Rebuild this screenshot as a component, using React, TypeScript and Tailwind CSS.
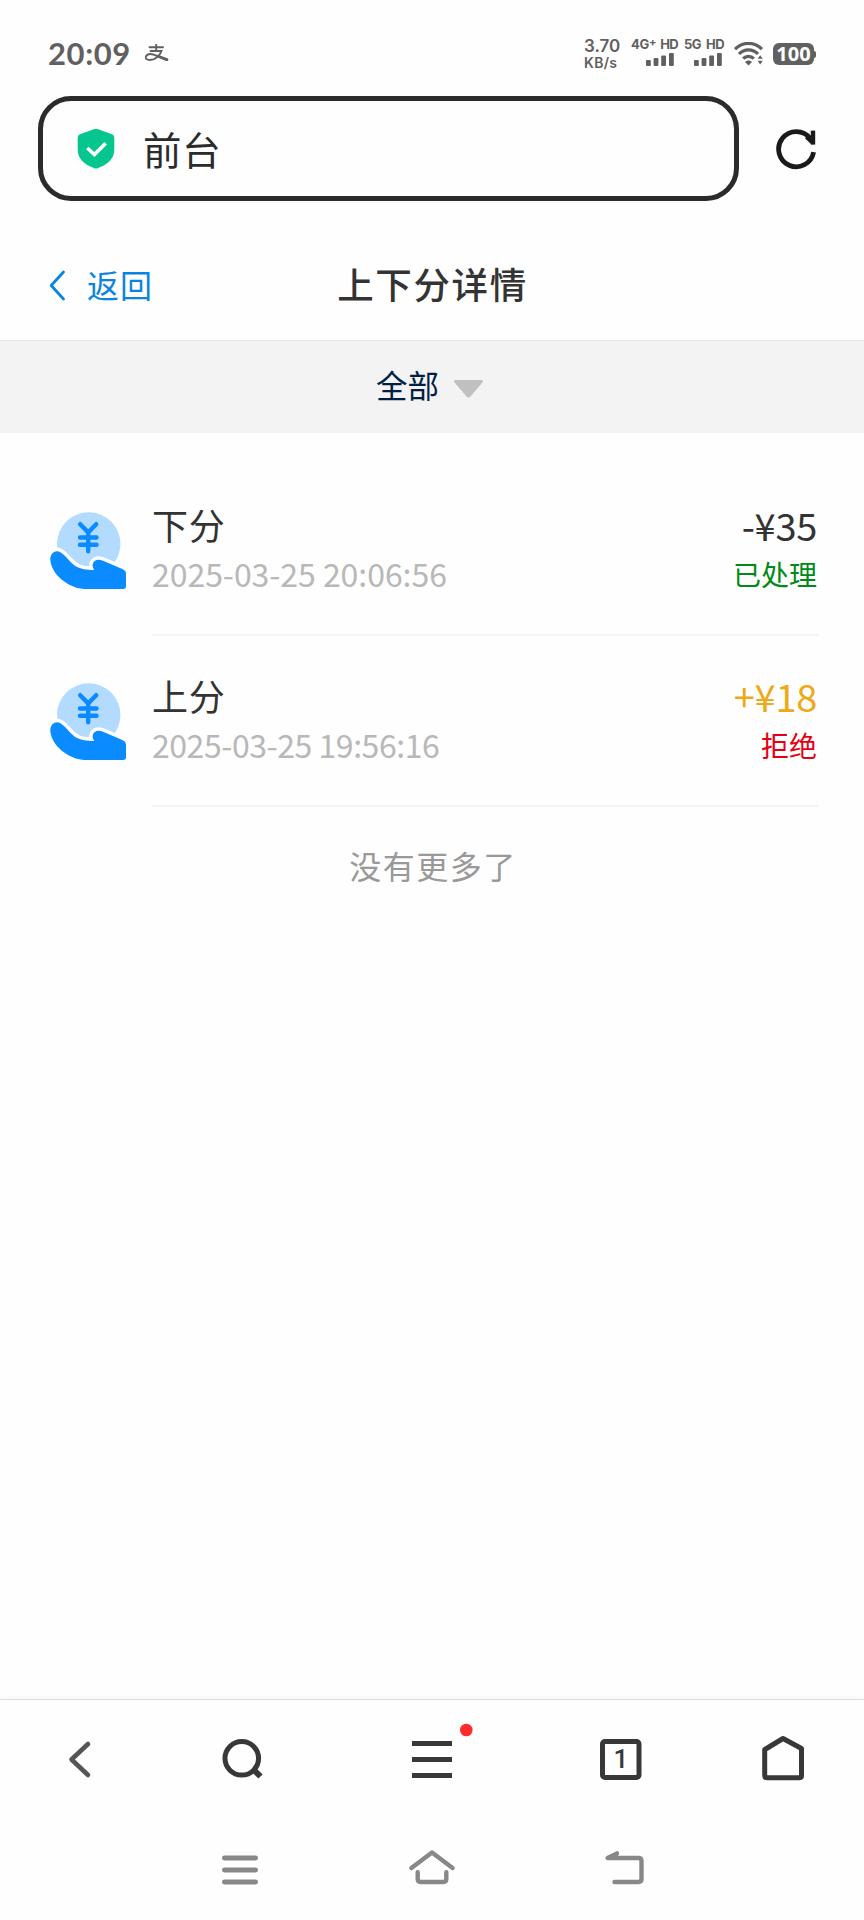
const RECORDS = [
  { id: 1, title: '下分', time: '2025-03-25 20:06:56', timeSpacing: 'tracking-[-0.05px]', amount: '-¥35', amountColor: 'text-[#333333]', status: '已处理', statusColor: 'text-[#008a17]' },
  { id: 2, title: '上分', time: '2025-03-25 19:56:16', timeSpacing: 'tracking-[-0.45px]', amount: '+¥18', amountColor: 'text-[#efa918]', status: '拒绝', statusColor: 'text-[#e60012]' },
];

function SignalBars() {
  return (
    <svg width="28" height="13" viewBox="0 0 28 13" fill="#606060">
      <rect x="0" y="7" width="4.8" height="6" rx="1" />
      <rect x="7.6" y="5" width="4.8" height="8" rx="1" />
      <rect x="15.2" y="2.6" width="4.8" height="10.4" rx="1" />
      <rect x="23" y="0" width="4.8" height="13" rx="1" />
    </svg>
  );
}

function StatusBar() {
  return (
    <div className="flex h-24 items-start pl-[48px] text-[#606060]">
      <span className="mt-[33px] w-[97px] font-['Lato'] text-[31px] font-bold leading-[40px] tracking-[0.6px]">20:09</span>
      <svg className="mt-[44px]" width="24" height="18" viewBox="0 0 24 18" fill="none" stroke="#606060" strokeWidth="1.9" strokeLinecap="round">
        <path d="M4.5 3.2H18M11.2 0.8V7M5.5 7H16.5C15 11.5 10 16 5 16C1.5 16 0 14.2 1 12.3C2.8 9 8 10 12 11.8L22 16" />
        <path d="M13 12.2L22 15.6" strokeWidth="2.8" />
      </svg>
      <div className="ml-[415px] mt-[39px] flex w-[47px] flex-col font-['Inter'] font-semibold">
        <span className="text-[17px] leading-[15px]">3.70</span>
        <span className="mt-[1px] text-[14px] leading-[15px] tracking-[0.3px]">KB/s</span>
      </div>
      <div className="mt-[38px] flex w-[54px] flex-col">
        <span className="flex items-start whitespace-nowrap font-['Inter'] text-[13px] font-bold leading-[13px] tracking-[-0.3px]">
          4G<span className="-mt-[2px] text-[11px] leading-[13px]">+</span>
          <span className="ml-[4px] tracking-[-0.6px]">HD</span>
        </span>
        <div className="ml-[15px] mt-[2px]"><SignalBars /></div>
      </div>
      <div className="mt-[38px] flex w-[49px] flex-col">
        <span className="-ml-[1px] flex whitespace-nowrap font-['Inter'] text-[13px] font-bold leading-[13px] tracking-[-0.5px]">
          5G<span className="ml-[5px]">HD</span>
        </span>
        <div className="ml-[9px] mt-[2px]"><SignalBars /></div>
      </div>
      <svg className="mt-[42px]" width="31" height="24" viewBox="0 0 31 24" fill="none" stroke="#606060" strokeWidth="3.2">
        <path d="M1 7.2C8.8 -0.6 20.2 -0.6 28 7.2" />
        <path d="M5 12C10.2 6.4 18.8 6.4 24 12" />
        <path d="M9.2 16.6C12 13.6 17 13.6 19.8 16.6" />
        <path d="M11 20C13 18 16 18 18 20L14.5 23.4Z" fill="#606060" stroke="none" />
        <path d="M23.6 16.8L26.2 13.2L28.8 16.8ZM23.6 18.8L26.2 22.4L28.8 18.8Z" fill="#606060" stroke="none" />
      </svg>
      <div className="ml-[8px] mt-[43px] flex items-center">
        <div className="flex h-[22px] w-[41px] items-center justify-center rounded-[6px] bg-[#606060] font-['Noto_Sans'] text-[20px] font-bold leading-[22px] text-white">100</div>
        <div className="h-[7px] w-[2px] rounded-r bg-[#606060]" />
      </div>
    </div>
  );
}

function AddressBar() {
  return (
    <div className="flex h-[105px] items-center pl-[38px]">
      <div className="flex h-[105px] w-[701px] items-center rounded-[33px] border-[5px] border-[#2b2b2b] pl-[34px]">
        <svg width="38" height="41" viewBox="0 0 38 41">
          <path d="M16.8 1.2Q19 0.1 21.2 1.2L35 6.2Q37.3 7.2 37.3 9.6V22C37.3 30.5 30.5 36.5 21.2 40Q19 41 16.8 40C7.5 36.5 0.7 30.5 0.7 22V9.6Q0.7 7.2 3 6.2Z" fill="#06c68f" />
          <path d="M10.3 20L17.4 26.6L28.7 15.2" fill="none" stroke="#fff" strokeWidth="3.6" />
        </svg>
        <span className="-mt-[2px] ml-[28px] text-[38.5px] leading-[50px] tracking-[0.8px] text-[#2b2b2b]">前台</span>
      </div>
      <svg className="ml-[36px]" width="42" height="42" viewBox="0 0 42 42" fill="none" stroke="#1a1a1a" strokeWidth="4.8">
        <path d="M38.6 24.2A17.6 17.6 0 1 1 35.2 10.4" />
        <path d="M38 2.6V16.6" strokeWidth="4.4" />
        <path d="M31.5 8.6L38 15" strokeWidth="4.4" />
      </svg>
    </div>
  );
}

function PageHeader() {
  return (
    <div className="mt-[25px] grid h-[114px] grid-cols-3 items-center">
      <div className="mt-[2px] flex items-center pl-[48px] text-[#0a85df]">
        <svg width="18" height="34" viewBox="0 0 18 34" fill="none" stroke="currentColor" strokeWidth="2.8" strokeLinecap="round" strokeLinejoin="round">
          <path d="M15.5 5L3.2 18.5L15.5 32" />
        </svg>
        <span className="ml-[21px] text-[32px] leading-[44px] tracking-[0.9px]">返回</span>
      </div>
      <h1 className="mt-[2px] whitespace-nowrap pl-[1px] text-center text-[36.5px] font-medium leading-[50px] tracking-[1.6px] text-[#333333]">上下分详情</h1>
    </div>
  );
}

function FilterBar() {
  return (
    <div className="flex h-[93px] items-center justify-center border-t border-[#e6e6e6] bg-[#f3f3f3] pr-[4px]">
      <span className="-mt-[6px] text-[31.5px] leading-[44px] text-[#001f45]">全部</span>
      <svg className="ml-[14px] mt-[4px]" width="31" height="20" viewBox="0 0 31 20">
        <path d="M3 1H28Q31.5 1 29.2 3.8L17.5 17.6Q15.5 19.6 13.5 17.6L1.8 3.8Q-0.5 1 3 1Z" fill="#c0c0c0" />
      </svg>
    </div>
  );
}

function HandCoinIcon() {
  return (
    <svg width="77" height="78" viewBox="0 0 77 78">
      <circle cx="38.7" cy="32" r="31.7" fill="#b3dbff" />
      <path
        d="M0.3 48C0 41 5.5 37 10.8 40.5C18 45 21.5 54.5 32 56.8C37 58 41 58 44.3 58C41.5 54 42.3 49.8 46.5 48.1C49.5 46.9 52.5 48.2 56 50L70.5 56.2C74.5 57.8 76 59 76 62V74.3Q76 77 73.3 77H34C17 75.5 1.5 62 0.3 48Z"
        fill="#0a8bff"
        stroke="#fff"
        strokeWidth="7"
        paintOrder="stroke"
      />
      <path d="M30.2 12.2L38.2 20.4L46.2 12.2M38.2 20.4V39.3M30 25.5H46.5M30 32.7H46.5" fill="none" stroke="#0a8bff" strokeWidth="4.4" strokeLinecap="round" strokeLinejoin="round" />
    </svg>
  );
}

function RecordRow({ record }: { record: (typeof RECORDS)[number] }) {
  return (
    <li className="flex h-[171px] pl-[50px] pr-[45px]">
      <div className="mt-[47px] w-[102px]"><HandCoinIcon /></div>
      <div className="flex flex-1 justify-between border-b-2 border-[#f5f5f5] pr-[2px]">
        <div className="flex flex-col">
          <span className="mt-[34px] text-[36px] leading-[50px] tracking-[0.8px] text-[#333333]">{record.title}</span>
          <span className={`mt-[4px] text-[32px] leading-[40px] text-[#b8b8b8] ${record.timeSpacing}`}>{record.time}</span>
        </div>
        <div className="flex flex-col items-end">
          <span className={`mt-[35px] text-[38px] leading-[50px] tracking-[-0.3px] ${record.amountColor}`}>{record.amount}</span>
          <span className={`mt-[4px] text-[28px] leading-[40px] ${record.statusColor}`}>{record.status}</span>
        </div>
      </div>
    </li>
  );
}

function BrowserBar() {
  return (
    <div className="relative h-[120px] border-t border-[#dedede] shadow-[0_-2px_4px_rgba(0,0,0,0.03)]">
      <svg width="864" height="119" viewBox="0 0 864 119" fill="none" stroke="#383838" strokeWidth="5">
        <path d="M88 44L71.5 59.5L88 75" stroke="#555555" strokeWidth="4.6" strokeLinecap="round" strokeLinejoin="round" />
        <circle cx="241.8" cy="58.3" r="16.8" />
        <path d="M253 69L260.5 76.5" strokeWidth="6" />
        <path d="M412 43.5H452M412 59.5H452M412 75.5H452" />
        <rect x="602.5" y="41.5" width="36.5" height="36" rx="2.5" />
        <path d="M766.5 48.5L783 38.5L801.5 48.5V75.5Q801.5 77.8 799.2 77.8H767Q764.7 77.8 764.7 75.5V49.5Z" strokeLinejoin="round" />
        <circle cx="466.3" cy="30" r="6.3" fill="#ff2b2b" stroke="none" />
        <text x="621" y="68" fill="#383838" stroke="none" textAnchor="middle" className="font-['Roboto'] text-[26px] font-medium">1</text>
      </svg>
    </div>
  );
}

function SystemNav() {
  return (
    <div className="flex h-[101px] items-start pl-[221px] pt-[29px]">
      <svg width="38" height="38" viewBox="0 0 38 38" stroke="#888888" strokeWidth="4.8" strokeLinecap="round">
        <path d="M3.4 10H34.6M3.4 22H34.6M3.4 34H34.6" />
      </svg>
      <svg className="ml-[149px]" width="48" height="38" viewBox="0 0 48 38" fill="none" stroke="#888888" strokeWidth="4.4" strokeLinecap="round" strokeLinejoin="round">
        <path d="M3.4 20L24 4.6L44.6 20" />
        <path d="M9.7 24.2V31Q9.7 34 12.7 34H35.3Q38.3 34 38.3 31V24.2" />
      </svg>
      <svg className="ml-[148px]" width="40" height="38" viewBox="0 0 40 38" fill="none" stroke="#888888" strokeWidth="4.4" strokeLinecap="round" strokeLinejoin="round">
        <path d="M13 5.4L3.6 10H34.5Q37.5 10 37.5 13V31Q37.5 34 34.5 34H10.5" />
        <path d="M4 10L13 5.4V10Z" fill="#888888" strokeWidth="2" />
      </svg>
    </div>
  );
}

export default function App() {
  return (
    <div className="flex h-[1920px] w-[864px] flex-col overflow-hidden bg-[#fefefe] font-['Noto_Sans_CJK_SC',sans-serif]">
      <StatusBar />
      <AddressBar />
      <PageHeader />
      <FilterBar />
      <ul className="mt-[32px]">
        {RECORDS.map(record => (
          <RecordRow key={record.id} record={record} />
        ))}
      </ul>
      <p className="mt-[33px] pl-[2px] text-center text-[32px] leading-[50px] tracking-[1.5px] text-[#999999]">没有更多了</p>
      <div className="flex-1" />
      <BrowserBar />
      <SystemNav />
    </div>
  );
}
